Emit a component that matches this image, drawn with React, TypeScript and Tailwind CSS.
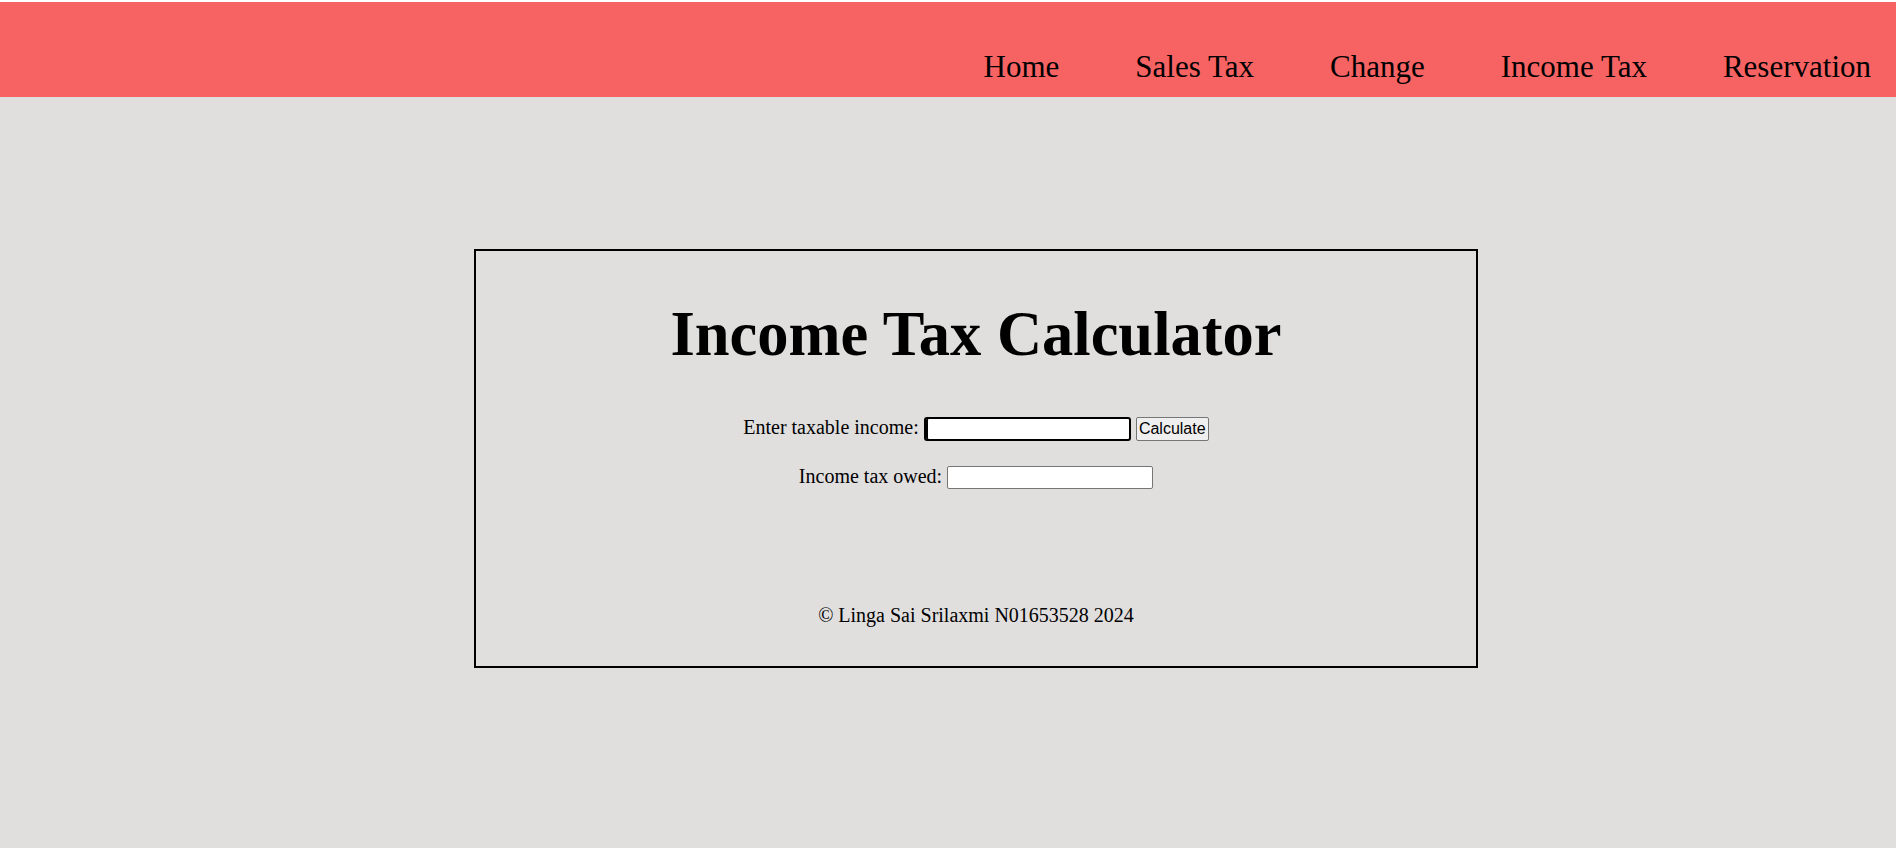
import { useState } from "react";

const links = ["Home", "Sales Tax", "Change", "Income Tax", "Reservation"];

function calcTax(income: number) {
  if (income <= 0) return 0;
  if (income <= 50000) return income * 0.1;
  if (income <= 100000) return 5000 + (income - 50000) * 0.2;
  return 15000 + (income - 100000) * 0.3;
}

export default function App() {
  const [income, setIncome] = useState("");
  const [owed, setOwed] = useState("");

  const handleCalculate = () => {
    const n = parseFloat(income);
    if (isNaN(n)) {
      setOwed("");
      return;
    }
    setOwed(calcTax(n).toFixed(2));
  };

  return (
    <div className="min-h-[848px] flex flex-col bg-white pt-[2px] font-['Liberation_Serif','Times_New_Roman',serif] text-black">
      {/* Nav */}
      <header className="h-[95px] bg-[#f76363] flex justify-end items-start pt-[47px] pr-[25px]">
        <nav className="flex gap-[76px]">
          {links.map((l) => (
            <a key={l} href="#" className="text-[31px] leading-[35px] text-black">
              {l}
            </a>
          ))}
        </nav>
      </header>

      {/* Main */}
      <main className="flex-1 bg-[#e0dfde] pt-[152px]">
        <div className="ml-[474px] w-[1004px] h-[419px] border-2 border-black flex flex-col items-center">
          <h1 className="mt-[52px] text-[62.5px] leading-none font-bold">Income Tax Calculator</h1>

          <div className="mt-[51px] h-[24px] flex items-center gap-[5px]">
            <label htmlFor="income" className="text-[20px] leading-none mb-[3px]">
              Enter taxable income:
            </label>
            <input
              id="income"
              value={income}
              onChange={(e) => setIncome(e.target.value)}
              className="w-[207px] h-[24px] bg-white border-2 border-black rounded-[3px] px-[2px] text-[16px] font-['Liberation_Sans',Arial,sans-serif] shadow-[inset_2px_0_0_#000] outline-none"
            />
            <button
              onClick={handleCalculate}
              className="h-[24px] w-[73px] bg-[#efefef] border border-[#767676] rounded-[2px] text-[16px] leading-none text-black font-['Liberation_Sans',Arial,sans-serif]"
            >
              Calculate
            </button>
          </div>

          <div className="mt-[25px] h-[23px] flex items-center gap-[5px]">
            <label htmlFor="owed" className="text-[20px] leading-none mb-[3px]">
              Income tax owed:
            </label>
            <input
              id="owed"
              readOnly
              value={owed}
              className="w-[206px] h-[23px] bg-white border border-[#767676] rounded-[2px] px-[2px] text-[16px] font-['Liberation_Sans',Arial,sans-serif] outline-none"
            />
          </div>

          <p className="mt-[116px] text-[20px] leading-none">© Linga Sai Srilaxmi N01653528 2024</p>
        </div>
      </main>
    </div>
  );
}
